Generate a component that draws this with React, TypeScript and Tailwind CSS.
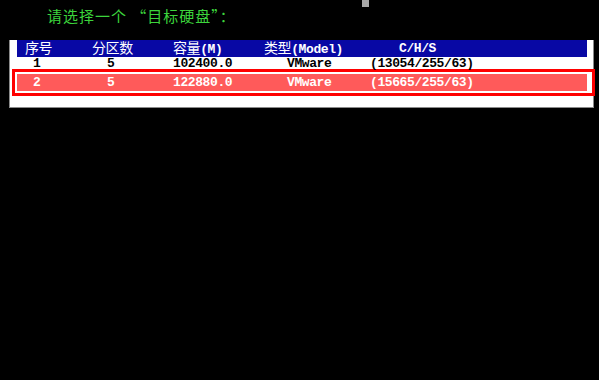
import React from "react";

const mono = { fontFamily: '"Liberation Mono", "Noto Sans CJK SC", monospace' };

type Cell = { text: string; w: number; cjk?: boolean };

const headerCells: Cell[] = [
  { text: "序号", w: 67, cjk: true },
  { text: "分区数", w: 81, cjk: true },
  { text: "容量(M)", w: 91 },
  { text: "类型(Model)", w: 135 },
  { text: "C/H/S", w: 120 },
];

const rows = [
  ["1", "5", "102400.0", "VMware", "(13054/255/63)"],
  ["2", "5", "122880.0", "VMware", "(15665/255/63)"],
];
const rowWidths = [74, 66, 114, 83, 160];

// mixed text: cjk glyphs slightly larger, like the bitmap font
function Mixed({ text }: { text: string }) {
  const parts = text.split(/([\u4e00-\u9fff]+)/).filter(Boolean);
  return (
    <>
      {parts.map((p, i) =>
        /[\u4e00-\u9fff]/.test(p) ? (
          <span key={i} className="text-[14px] font-normal" style={{ fontFamily: '"Noto Sans CJK SC", sans-serif' }}>
            {p}
          </span>
        ) : (
          <span key={i}>{p}</span>
        )
      )}
    </>
  );
}

function DataRow({ cells, className }: { cells: string[]; className: string }) {
  return (
    <div className={`flex items-center pl-[16px] text-[13px] font-bold tracking-[-0.4px] ${className}`} style={mono}>
      {cells.map((c, i) => (
        <div key={i} className="shrink-0 whitespace-pre" style={{ width: rowWidths[i] }}>
          {c}
        </div>
      ))}
    </div>
  );
}

export default function App() {
  return (
    <div className="relative w-[599px] h-[380px] bg-black overflow-hidden">
      {/* blinking cursor */}
      <div className="absolute left-[362px] top-0 w-[7px] h-[7px] bg-[#a8a8a8]" />

      <div className="h-[40px] pl-[47px] pt-[4px]">
        <span
          className="text-[15px] text-[#3cd43c] tracking-[1px]"
          style={{ fontFamily: '"Noto Sans CJK SC", sans-serif' }}
        >
          请选择一个 “目标硬盘”：
        </span>
      </div>

      <div className="ml-[9px] w-[585px] h-[68px] bg-white border-l border-r border-b border-[#8a8a8a]">
        <div
          className="ml-[7px] w-[570px] h-[17px] bg-[#0808a4] text-white flex items-center pl-[8px] text-[13px] font-bold tracking-[-0.4px]"
          style={mono}
        >
          {headerCells.map((c) => (
            <div key={c.text} className="shrink-0 whitespace-pre leading-[17px]" style={{ width: c.w }}>
              <Mixed text={c.text} />
            </div>
          ))}
        </div>

        <DataRow cells={rows[0]} className="ml-[7px] w-[570px] h-[12px] leading-[12px] text-black pt-[1px]" />

        <div className="ml-[2px] w-[583px] h-[27px] border-[3px] border-[#ff0000] pt-[2px] pl-[2px]">
          <DataRow cells={rows[1]} className="w-[570px] h-[17px] bg-[#ff5a5a] text-white" />
        </div>
      </div>
    </div>
  );
}
